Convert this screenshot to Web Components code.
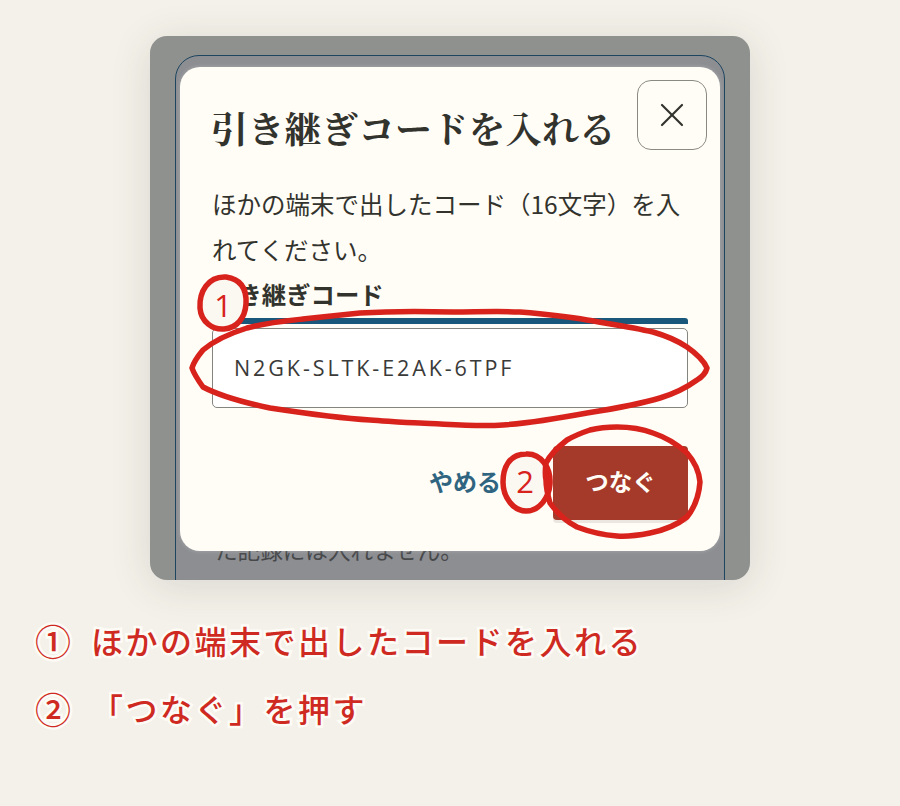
<!DOCTYPE html>
<html lang="ja">
<head>
<meta charset="utf-8">
<title>引き継ぎコードを入れる</title>
<style>
  html, body { margin: 0; padding: 0; }
  body {
    width: 900px; height: 806px; overflow: hidden; position: relative;
    background: #f4f1ea;
    font-family: "Noto Sans CJK JP", "Liberation Sans", sans-serif;
  }
</style>
</head>
<body>
<guide-page>
  <phone-shot slot="shot">
    <code-dialog
      heading="引き継ぎコードを入れる"
      label="引き継ぎコード"
      code="N2GK-SLTK-E2AK-6TPF">
      ほかの端末で出したコード（16文字）を入れてください。
    </code-dialog>
  </phone-shot>
  <step-note slot="notes" mark="①">ほかの端末で出したコードを入れる</step-note>
  <step-note slot="notes" mark="②">「つなぐ」を押す</step-note>
</guide-page>
<red-marks></red-marks>

<script>
const JP = '"Noto Sans CJK JP", "Liberation Sans", sans-serif';

class GuidePage extends HTMLElement {
  constructor() {
    super();
    this.attachShadow({ mode: 'open' });
    this.shadowRoot.innerHTML = `
      <style>
        :host { display: flex; flex-direction: column; align-items: center; padding-top: 36px; }
        .notes { align-self: stretch; display: flex; flex-direction: column; gap: 34px; padding: 43px 0 0 35px; }
      </style>
      <slot name="shot"></slot>
      <div class="notes"><slot name="notes"></slot></div>
    `;
  }
}

class PhoneShot extends HTMLElement {
  constructor() {
    super();
    this.attachShadow({ mode: 'open' });
    this.shadowRoot.innerHTML = `
      <style>
        :host {
          display: block; position: relative; box-sizing: border-box;
          width: 600px; height: 544px; padding: 19px 25px 0;
          border-radius: 17px;
          background: #8f918f;
          box-shadow: 0 6px 40px rgba(60, 55, 40, .14);
        }
        .clip { height: 525px; overflow: hidden; }
        .panel {
          box-sizing: border-box; height: 560px; padding: 477px 40px 0 39px;
          border: 1px solid #1d4560; border-radius: 24px;
          background: #8c8e92;
          font: 400 22.6px/1.5 ${JP}; color: #47484a;
        }
        ::slotted(code-dialog) { position: absolute; left: 30px; top: 31px; }
      </style>
      <div class="clip"><div class="panel">た記録には入れません。</div></div>
      <slot></slot>
    `;
  }
}

class CodeDialog extends HTMLElement {
  constructor() {
    super();
    this.attachShadow({ mode: 'open' });
  }

  connectedCallback() {
    const heading = this.getAttribute('heading');
    const label = this.getAttribute('label');
    const code = this.getAttribute('code');
    this.shadowRoot.innerHTML = `
      <style>
        :host {
          display: flex; flex-direction: column; box-sizing: border-box;
          width: 540px; height: 484px; padding: 13px 32px 0 32px;
          border-radius: 20px; background: #fffdf6;
          font-family: ${JP}; color: #33332e;
          box-shadow: 0 0 4px rgba(255, 255, 255, .25);
        }
        header { display: flex; justify-content: space-between; margin-right: -19px; }
        h2 {
          margin: 0 0 0 -1px; padding-top: 22px;
          font: 700 36.8px/1.4 "Noto Serif CJK JP", ${JP};
          white-space: nowrap;
        }
        .close {
          flex: none; box-sizing: border-box; width: 70px; height: 70px; padding: 0;
          display: flex; align-items: center; justify-content: center;
          background: transparent; border: 1.5px solid #8a8a84; border-radius: 14px;
          color: #33332e;
        }
        p {
          margin: 27px 0 0; width: 476px;
          font-size: 24.5px; line-height: 46px; font-weight: 400;
        }
        .label { margin: 3px 0 0 1px; font-size: 24.4px; line-height: 36px; font-weight: 700; }
        .bar { height: 6px; margin-top: 6px; background: #19587a; border-radius: 3px 3px 0 0; }
        .input {
          box-sizing: border-box; height: 80px; margin-top: 4px; padding-left: 21px;
          display: flex; align-items: center;
          background: #fff; border: 1.5px solid #85857f; border-radius: 5px;
          font: 400 21.5px "Open Sans", sans-serif; letter-spacing: 2.9px; color: #3a3a38;
        }
        .actions { display: flex; justify-content: flex-end; align-items: center; margin-top: 38px; }
        .cancel {
          background: none; border: 0; padding: 0 0 4px; margin-right: 52px;
          font: 700 24px ${JP}; color: #2f6580;
        }
        .ok {
          width: 135px; height: 74px; padding: 0 0 4px; border: 0; border-radius: 4px;
          background: #a63a2a; color: #fffdf6;
          font: 700 23.5px ${JP};
          box-shadow: 0 3px 0 rgba(120, 110, 100, .15);
        }
      </style>
      <header>
        <h2>${heading}</h2>
        <button class="close" aria-label="閉じる">
          <svg width="24" height="24" viewBox="0 0 24 24" fill="none" stroke="currentColor" stroke-width="2.2" stroke-linecap="round">
            <line x1="2" y1="2" x2="22" y2="22"/>
            <line x1="22" y1="2" x2="2" y2="22"/>
          </svg>
        </button>
      </header>
      <p><slot></slot></p>
      <div class="label">${label}</div>
      <div class="bar"></div>
      <div class="input">${code}</div>
      <div class="actions">
        <button class="cancel">やめる</button>
        <button class="ok">つなぐ</button>
      </div>
    `;
  }
}

class StepNote extends HTMLElement {
  constructor() {
    super();
    this.attachShadow({ mode: 'open' });
  }

  connectedCallback() {
    this.shadowRoot.innerHTML = `
      <style>
        :host {
          display: flex; align-items: center; gap: 20px; height: 34px;
          font: 500 32px/34px ${JP}; color: #cf2a22;
          letter-spacing: 2.5px; white-space: nowrap;
          -webkit-text-stroke: 5px rgba(255, 253, 248, .9);
          paint-order: stroke fill;
        }
        .mark { width: 36px; font-size: 36px; letter-spacing: 0; text-align: center; }
      </style>
      <span class="mark">${this.getAttribute('mark')}</span>
      <span><slot></slot></span>
    `;
  }
}

// 手描きの赤丸: ページ全体に重ねる
class RedMarks extends HTMLElement {
  constructor() {
    super();
    this.attachShadow({ mode: 'open' });
    this.shadowRoot.innerHTML = `
      <style>
        :host { display: block; position: absolute; left: 0; top: 0; width: 900px; height: 806px; pointer-events: none; }
        svg { display: block; }
        path { fill: none; stroke: #d8221c; stroke-width: 5.5; stroke-linecap: round; stroke-linejoin: round; }
        path.badge { fill: #fbf8f2; }
        text { font: 400 31px "Open Sans", sans-serif; fill: #d8221c; text-anchor: middle; }
      </style>
      <svg width="900" height="806" viewBox="0 0 900 806">
        <path class="badge" d="M226 277 C208 276 199 292 200 308 C201 322 213 330 224 329 C237 328 245 318 246 304 C247 288 240 279 226 277 Z"/>
        <text x="223" y="317">1</text>

        <path d="M247 328 C265 323 285 321 303 319 C322 317 340 315 360 313 C390 311 420 311 453 312 C475 312 498 311 520 312 C545 314 565 316 587 320 C610 324 632 327 653 332 C667 336 678 341 687 347 C697 354 704 361 707 368 C706 372 702 377 697 380 C686 388 673 394 660 398 C637 405 612 409 587 413 C560 418 530 423 503 425 C475 427 448 424 420 423 C402 423 388 421 370 420 C336 418 303 413 270 408 C246 403 222 397 203 387 C198 380 194 374 192 368 C194 361 198 356 203 350 C215 340 231 333 247 328 Z"/>

        <path class="badge" d="M526 454 C509 454 503 468 503 482 C503 498 514 511 526 511 C540 511 549 497 550 484 C551 468 541 453 526 454 Z"/>
        <text x="525" y="493">2</text>

        <path d="M653 433 C640 428 630 427 617 427 C606 427 598 428 590 430 C581 433 574 436 567 440 C558 447 550 455 546 463 C545 470 545 475 546 480 C546 489 548 496 550 503 C558 514 567 522 577 527 C590 532 604 535 617 536 C630 537 640 535 650 533 C665 530 677 525 687 517 C695 507 699 495 700 482 C699 471 694 461 687 453 C677 444 665 437 653 433 Z"/>
      </svg>
    `;
  }
}

customElements.define('guide-page', GuidePage);
customElements.define('phone-shot', PhoneShot);
customElements.define('code-dialog', CodeDialog);
customElements.define('step-note', StepNote);
customElements.define('red-marks', RedMarks);
</script>
</body>
</html>
